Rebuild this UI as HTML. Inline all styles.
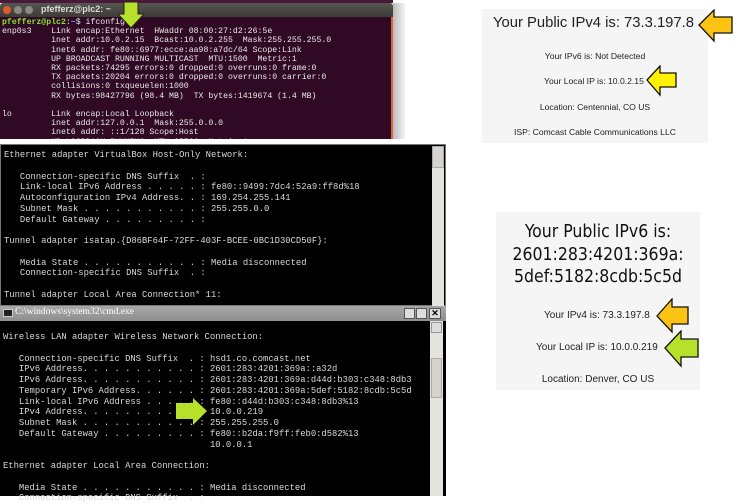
<!DOCTYPE html>
<html><head><meta charset="utf-8"><style>
*{margin:0;padding:0;box-sizing:border-box}
body{width:740px;height:496px;background:#fff;position:relative;overflow:hidden;font-family:"Liberation Sans",sans-serif}
.abs{position:absolute}
pre{position:absolute;font-family:"Liberation Mono",monospace;white-space:pre;margin:0}
.ub{font-size:8.2px;line-height:9.2px;color:#e8e8e8}
.cmd{font-size:8.85px;line-height:10.75px;color:#d8d8d8}
.c{text-align:center;position:absolute;color:#222;white-space:nowrap}
</style></head><body>
<!-- ubuntu terminal -->
<div class="abs" style="left:0;top:0;width:393px;height:3px;background:#4a1838"></div>
<div class="abs" style="left:393px;top:3px;width:12px;height:136px;background:linear-gradient(90deg,#bbb,#f4f4f4)"></div>
<div class="abs" style="left:0;top:3px;width:393px;height:14px;background:linear-gradient(#57554f,#3d3c38);border-radius:3px 3px 0 0"></div>
<div class="abs" style="left:3px;top:6px;width:8px;height:8px;border-radius:50%;background:#e05a2b"></div>
<div class="abs" style="left:14px;top:6px;width:8px;height:8px;border-radius:50%;background:#8a8983"></div>
<div class="abs" style="left:25px;top:6px;width:8px;height:8px;border-radius:50%;background:#8a8983"></div>
<div class="abs" style="left:41px;top:4px;font-size:9px;color:#ddd;font-weight:bold">pfefferz@plc2: ~</div>
<div class="abs" style="left:0;top:17px;width:393px;height:122px;background:#300a24;border-right:2px solid #e0643a"></div>
<pre class="ub" style="left:2px;top:18px"><span style="color:#8ae234;font-weight:bold">pfefferz@plc2</span>:<span style="color:#729fcf;font-weight:bold">~</span>$ ifconfig
enp0s3    Link encap:Ethernet  HWaddr 08:00:27:d2:26:5e
          inet addr:10.0.2.15  Bcast:10.0.2.255  Mask:255.255.255.0
          inet6 addr: fe80::6977:ecce:aa98:a7dc/64 Scope:Link
          UP BROADCAST RUNNING MULTICAST  MTU:1500  Metric:1
          RX packets:74295 errors:0 dropped:0 overruns:0 frame:0
          TX packets:20204 errors:0 dropped:0 overruns:0 carrier:0
          collisions:0 txqueuelen:1000
          RX bytes:98427796 (98.4 MB)  TX bytes:1419674 (1.4 MB)

lo        Link encap:Local Loopback
          inet addr:127.0.0.1  Mask:255.0.0.0
          inet6 addr: ::1/128 Scope:Host
          UP LOOPBACK RUNNING  MTU:65536  Metric:1</pre>
<div class="abs" style="left:0;top:139px;width:405px;height:5px;background:#fff"></div>
<svg class="abs" style="left:117px;top:1px" width="28" height="28" viewBox="0 0 28 28"><polygon points="7,1 21,1 21,13 27,13 14,27 1,13 7,13" fill="#b6e02a" stroke="#222" stroke-width="1"/></svg>

<!-- cmd 1 -->
<div class="abs" style="left:0;top:144px;width:446px;height:162px;background:#000;border:1px solid #777"></div>
<div class="abs" style="left:432px;top:146px;width:12px;height:160px;background:#e6e4df"></div>
<div class="abs" style="left:432px;top:146px;width:12px;height:22px;background:#d6d3ce;border:1px solid #aaa"></div>
<pre class="cmd" style="left:4px;top:150px">Ethernet adapter VirtualBox Host-Only Network:

   Connection-specific DNS Suffix  . :
   Link-local IPv6 Address . . . . . : fe80::9499:7dc4:52a9:ff8d%18
   Autoconfiguration IPv4 Address. . : 169.254.255.141
   Subnet Mask . . . . . . . . . . . : 255.255.0.0
   Default Gateway . . . . . . . . . :

Tunnel adapter isatap.{D86BF64F-72FF-403F-BCEE-0BC1D30CD50F}:

   Media State . . . . . . . . . . . : Media disconnected
   Connection-specific DNS Suffix  . :

Tunnel adapter Local Area Connection* 11:</pre>

<!-- cmd 2 -->
<div class="abs" style="left:0;top:306px;width:446px;height:15px;background:linear-gradient(#a8a8a8,#8e8e8e)"></div>
<div class="abs" style="left:3px;top:309px;width:10px;height:8px;background:#222;border:1px solid #ccc"></div>
<div class="abs" style="left:15px;top:307px;font-family:'Liberation Serif',serif;font-size:9.5px;color:#fff">C:\windows\system32\cmd.exe</div>
<div class="abs" style="left:404px;top:308px;width:11px;height:11px;background:#ddd;border:1px solid #555"></div>
<div class="abs" style="left:416px;top:308px;width:11px;height:11px;background:#ddd;border:1px solid #555"></div>
<div class="abs" style="left:429px;top:308px;width:12px;height:11px;background:#ddd;border:1px solid #555;font-size:9px;line-height:9px;text-align:center;font-weight:bold">✕</div>
<div class="abs" style="left:0;top:321px;width:446px;height:175px;background:#000"></div>
<div class="abs" style="left:430px;top:321px;width:13px;height:175px;background:#e6e4df"></div>
<div class="abs" style="left:431px;top:322px;width:11px;height:11px;background:#ddd;border:1px solid #999"></div>
<div class="abs" style="left:431px;top:358px;width:11px;height:40px;background:#d6d3ce;border:1px solid #aaa"></div>
<pre class="cmd" style="left:3px;top:332px">Wireless LAN adapter Wireless Network Connection:

   Connection-specific DNS Suffix  . : hsd1.co.comcast.net
   IPv6 Address. . . . . . . . . . . : 2601:283:4201:369a::a32d
   IPv6 Address. . . . . . . . . . . : 2601:283:4201:369a:d44d:b303:c348:8db3
   Temporary IPv6 Address. . . . . . : 2601:283:4201:369a:5def:5182:8cdb:5c5d
   Link-local IPv6 Address . . . . . : fe80::d44d:b303:c348:8db3%13
   IPv4 Address. . . . . . . . . . . : 10.0.0.219
   Subnet Mask . . . . . . . . . . . : 255.255.255.0
   Default Gateway . . . . . . . . . : fe80::b2da:f9ff:feb0:d582%13
                                       10.0.0.1

Ethernet adapter Local Area Connection:

   Media State . . . . . . . . . . . : Media disconnected
   Connection-specific DNS Suffix  . :</pre>
<svg class="abs" style="left:175px;top:397px" width="34" height="30" viewBox="0 0 34 30"><polygon points="1,6 18,6 18,1 32,14 18,28 18,22 1,22" fill="#b6e02a"/></svg>

<!-- panel 1 -->
<div class="abs" style="left:482px;top:9px;width:226px;height:134px;background:#f5f5f5"></div>
<div class="abs" style="left:493px;top:15px;font-size:14.8px;color:#222;white-space:nowrap">Your Public IPv4 is: 73.3.197.8</div>
<div class="c" style="left:482px;width:226px;top:51px;font-size:8.6px">Your IPv6 is: Not Detected</div>
<div class="abs" style="left:544px;top:76px;font-size:8.6px;color:#222">Your Local IP is: 10.0.2.15</div>
<div class="c" style="left:482px;width:226px;top:102px;font-size:8.6px">Location: Centennial, CO US</div>
<div class="c" style="left:482px;width:226px;top:127px;font-size:8.6px">ISP: Comcast Cable Communications LLC</div>
<svg class="abs" style="left:698px;top:9px" width="36" height="34" viewBox="0 0 36 34"><polygon points="1,16 16,1 16,8 34,8 34,24 16,24 16,32" fill="#fcc312" stroke="#111" stroke-width="1.3"/></svg>
<svg class="abs" style="left:646px;top:65px" width="32" height="32" viewBox="0 0 32 32"><polygon points="1,15 14,1 14,8 30,8 30,22 14,22 14,30" fill="#fff200" stroke="#111" stroke-width="1.3"/></svg>

<!-- panel 2 -->
<div class="abs" style="left:496px;top:212px;width:204px;height:178px;background:#f5f5f5"></div>
<div class="c" style="left:496px;width:204px;top:221px;font-size:17.5px;line-height:22.5px;color:#111;font-family:'DejaVu Sans Condensed','DejaVu Sans',sans-serif;font-stretch:condensed">Your Public IPv6 is:<br>2601:283:4201:369a:<br>5def:5182:8cdb:5c5d</div>
<div class="abs" style="left:544px;top:310px;font-size:10px;color:#222">Your IPv4 is: 73.3.197.8</div>
<div class="abs" style="left:536px;top:342px;font-size:10px;color:#222">Your Local IP is: 10.0.0.219</div>
<div class="c" style="left:496px;width:204px;top:374px;font-size:10px">Location: Denver, CO US</div>
<svg class="abs" style="left:656px;top:298px" width="34" height="36" viewBox="0 0 34 36"><polygon points="1,18 16,1 16,9 32,9 32,26 16,26 16,34" fill="#fcc312" stroke="#111" stroke-width="1.3"/></svg>
<svg class="abs" style="left:664px;top:330px" width="36" height="38" viewBox="0 0 36 38"><polygon points="1,18 17,1 17,9 34,9 34,27 17,27 17,36" fill="#b6e02a" stroke="#111" stroke-width="1.3"/></svg>
</body></html>
